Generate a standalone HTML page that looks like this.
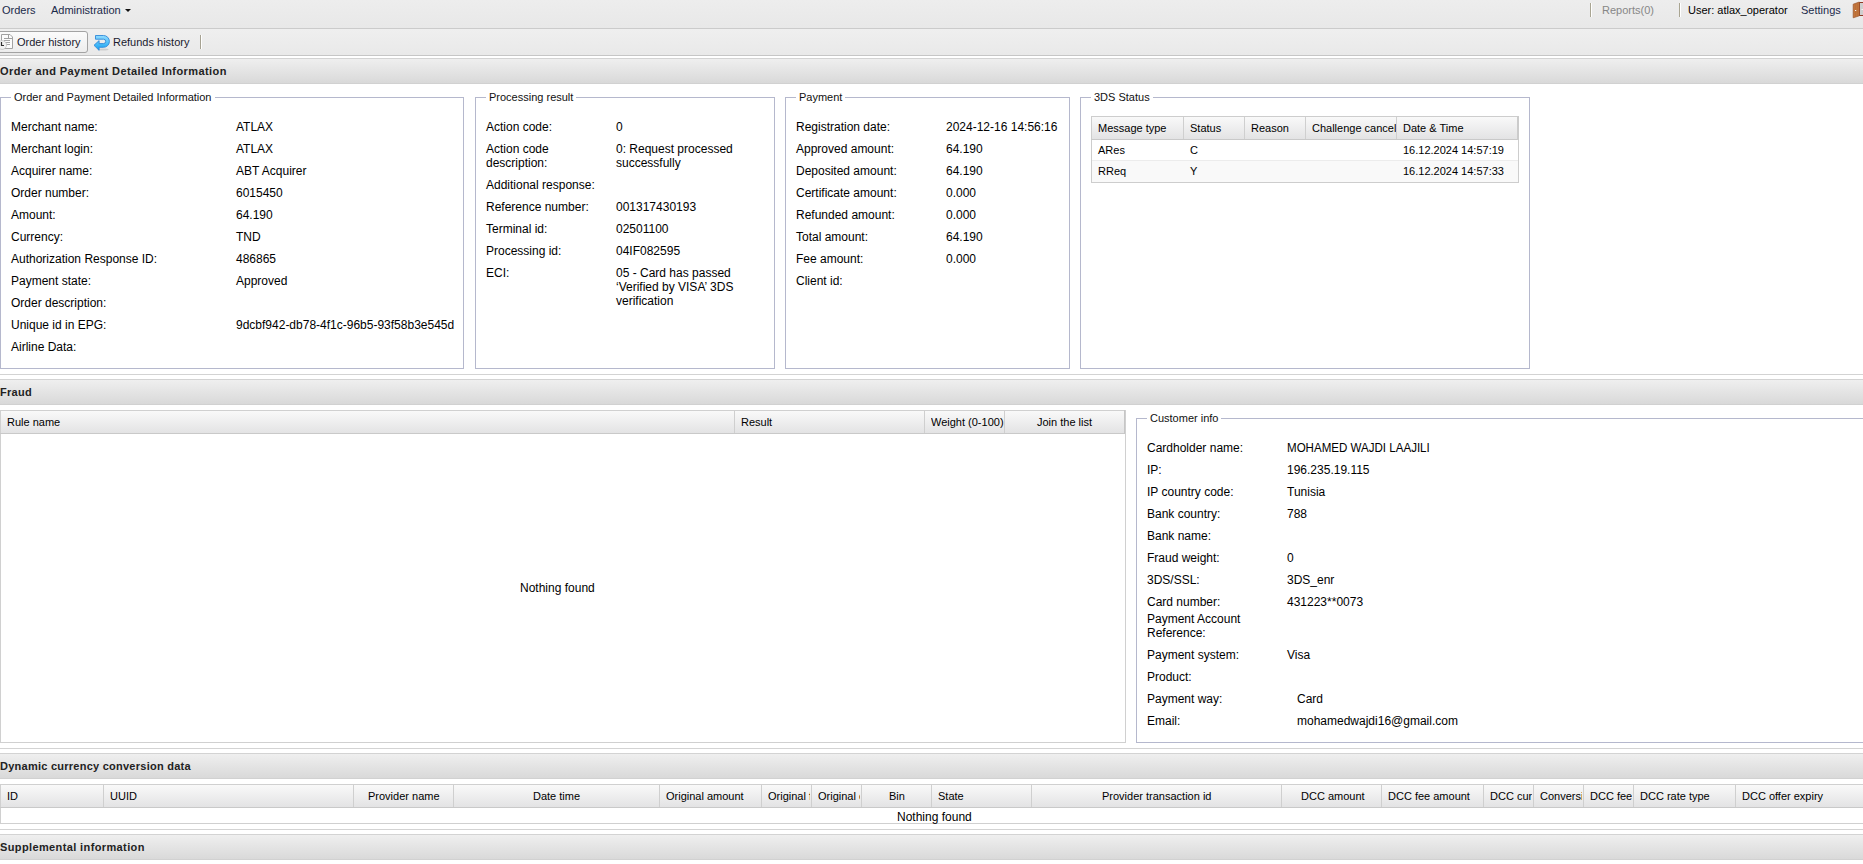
<!DOCTYPE html><html><head><meta charset="utf-8"><style>
*{box-sizing:border-box;margin:0;padding:0}
html,body{width:1863px;height:864px;overflow:hidden;background:#fff;font-family:"Liberation Sans",sans-serif;font-size:12px;color:#000}
.a{position:absolute;white-space:nowrap;line-height:14px}
.r{position:absolute}
.hl{position:absolute;left:0;width:1863px;height:1px}
.hdr{position:absolute;left:0;width:1863px;height:25px;background:linear-gradient(#efefef,#d9d9d9);border-bottom:1px solid #d1d1d1}
.b{font-weight:bold;color:#222}
.lg{font-size:11px;color:#111;background:#fff;padding:0 3px}
.fs{position:absolute;border:1px solid #b5b8cd}
.th{position:absolute;background:linear-gradient(#f9f9f9,#e3e3e4)}
.vd{position:absolute;width:1px;background:#cfcfcf}
</style></head><body>
<div class="r" style="left:0;top:0;width:1863px;height:28px;background:linear-gradient(#ededed,#e8e8e8)"></div>
<div class="hl" style="top:28px;background:#cbcbcb"></div>
<div class="a " style="left:2px;top:3px;color:#1b2a4a;font-size:11px;">Orders</div>
<div class="a " style="left:51px;top:3px;color:#1b2a4a;font-size:11px;">Administration</div>
<div class="r" style="left:125px;top:9px;width:0;height:0;border-left:3px solid transparent;border-right:3px solid transparent;border-top:3px solid #111"></div>
<div class="r" style="left:1590px;top:3px;width:1px;height:14px;background:#a9a592"></div><div class="r" style="left:1591px;top:3px;width:1px;height:14px;background:#fff"></div>
<div class="a " style="left:1602px;top:3px;color:#878787;font-size:11px;">Reports(0)</div>
<div class="r" style="left:1679px;top:3px;width:1px;height:14px;background:#a9a592"></div><div class="r" style="left:1680px;top:3px;width:1px;height:14px;background:#fff"></div>
<div class="a " style="left:1688px;top:3px;color:#000;font-size:11px;">User: atlax_operator</div>
<div class="a " style="left:1801px;top:3px;color:#1b2a4a;font-size:11px;">Settings</div>
<svg class="r" style="left:1852px;top:0" width="11" height="20" viewBox="0 0 11 20">
<rect x="7.5" y="2.5" width="5" height="13" fill="#cfcfcf" stroke="#8e3a24" stroke-width="1"/>
<rect x="9.5" y="9" width="2" height="1" fill="#f4f4f4"/>
<path d="M1.2 4.2 L7.3 2 V15.8 L1.2 17.8 Z" fill="#c67a40" stroke="#9a5228" stroke-width="0.7"/>
<path d="M3.2 4 V16.6 M5.2 3.2 V16" stroke="#b0622e" stroke-width="0.6"/>
<rect x="3" y="10" width="1.2" height="1" fill="#f0f0f0"/>
</svg>
<div class="r" style="left:0;top:29px;width:1863px;height:26px;background:linear-gradient(#efefef,#e9e9e9)"></div>
<div class="hl" style="top:55px;background:#c6c6c6"></div>
<div class="r" style="left:-4px;top:31px;width:92px;height:22px;border:1px solid #a3a3a3;border-radius:3px;background:linear-gradient(#fbfbfb,#ededed)"></div>
<svg class="r" style="left:0;top:32px" width="16" height="20" viewBox="0 0 16 20">
<path d="M1.5 2.5 H10 L12.5 5 V16.5 H1.5 Z" fill="#fcfcfc" stroke="#a2a2a2" stroke-width="1"/>
<path d="M8.5 2.5 V6.5 M4 6.5 H12.5" fill="none" stroke="#a0a0a0" stroke-width="1"/>
<path d="M4 8.5 H10 M5 10.5 H10 M6 12.5 H10" stroke="#a6a6a6" stroke-width="1"/>
<circle cx="2.2" cy="13" r="4.4" fill="#f1f1f1" stroke="#c6c6c6" stroke-width="0.9"/>
<path d="M1.5 10 V13.5 H4" fill="none" stroke="#2e2e2e" stroke-width="1.2"/>
</svg>
<div class="a " style="left:17px;top:35px;color:#1a1a2e;font-size:11px;">Order history</div>
<svg class="r" style="left:91px;top:32px" width="20" height="20" viewBox="0 0 20 20">
<defs><linearGradient id="rg" x1="0" y1="0" x2="0" y2="1"><stop offset="0" stop-color="#92dcff"/><stop offset="1" stop-color="#12a2f2"/></linearGradient></defs>
<ellipse cx="12" cy="17.6" rx="5.5" ry="1" fill="#000" opacity="0.12"/>
<path transform="translate(0.5 0.5)" d="M4 3 H12 A5.9 5.9 0 0 1 12 14.8 H7.6 V17.8 L2.5 12.8 L7.6 8.1 V11.1 H12 A2.2 2.2 0 0 0 12 6.7 H4 Z" fill="url(#rg)" stroke="#3088d8" stroke-width="0.9" stroke-linejoin="round"/>
</svg>
<div class="a " style="left:113px;top:35px;color:#1a1a2e;font-size:11px;">Refunds history</div>
<div class="r" style="left:200px;top:35px;width:1px;height:14px;background:#a6a292"></div><div class="r" style="left:201px;top:35px;width:1px;height:14px;background:#fff"></div>
<div class="hl" style="top:58px;background:#d3d3d3"></div>
<div class="hdr" style="top:59px"></div>
<div class="a b" style="left:0px;top:64px;letter-spacing:0.42px;font-size:11px;">Order and Payment Detailed Information</div>
<div class="fs" style="left:0px;top:97px;width:464px;height:272px"></div>
<div class="a lg" style="left:11px;top:90px">Order and Payment Detailed Information</div>
<div class="a " style="left:11px;top:120px;">Merchant name:</div>
<div class="a " style="left:236px;top:120px;">ATLAX</div>
<div class="a " style="left:11px;top:142px;">Merchant login:</div>
<div class="a " style="left:236px;top:142px;">ATLAX</div>
<div class="a " style="left:11px;top:164px;">Acquirer name:</div>
<div class="a " style="left:236px;top:164px;">ABT Acquirer</div>
<div class="a " style="left:11px;top:186px;">Order number:</div>
<div class="a " style="left:236px;top:186px;">6015450</div>
<div class="a " style="left:11px;top:208px;">Amount:</div>
<div class="a " style="left:236px;top:208px;">64.190</div>
<div class="a " style="left:11px;top:230px;">Currency:</div>
<div class="a " style="left:236px;top:230px;">TND</div>
<div class="a " style="left:11px;top:252px;">Authorization Response ID:</div>
<div class="a " style="left:236px;top:252px;">486865</div>
<div class="a " style="left:11px;top:274px;">Payment state:</div>
<div class="a " style="left:236px;top:274px;">Approved</div>
<div class="a " style="left:11px;top:296px;">Order description:</div>
<div class="a " style="left:11px;top:318px;">Unique id in EPG:</div>
<div class="a " style="left:236px;top:318px;">9dcbf942-db78-4f1c-96b5-93f58b3e545d</div>
<div class="a " style="left:11px;top:340px;">Airline Data:</div>
<div class="fs" style="left:475px;top:97px;width:300px;height:272px"></div>
<div class="a lg" style="left:486px;top:90px">Processing result</div>
<div class="a " style="left:486px;top:120px;">Action code:</div>
<div class="a " style="left:616px;top:120px;">0</div>
<div class="a " style="left:486px;top:142px;">Action code</div>
<div class="a " style="left:486px;top:156px;">description:</div>
<div class="a " style="left:616px;top:142px;">0: Request processed</div>
<div class="a " style="left:616px;top:156px;">successfully</div>
<div class="a " style="left:486px;top:178px;">Additional response:</div>
<div class="a " style="left:486px;top:200px;">Reference number:</div>
<div class="a " style="left:616px;top:200px;">001317430193</div>
<div class="a " style="left:486px;top:222px;">Terminal id:</div>
<div class="a " style="left:616px;top:222px;">02501100</div>
<div class="a " style="left:486px;top:244px;">Processing id:</div>
<div class="a " style="left:616px;top:244px;">04IF082595</div>
<div class="a " style="left:486px;top:266px;">ECI:</div>
<div class="a " style="left:616px;top:266px;">05 - Card has passed</div>
<div class="a " style="left:616px;top:280px;">&#8216;Verified by VISA&#8217; 3DS</div>
<div class="a " style="left:616px;top:294px;">verification</div>
<div class="fs" style="left:785px;top:97px;width:285px;height:272px"></div>
<div class="a lg" style="left:796px;top:90px">Payment</div>
<div class="a " style="left:796px;top:120px;">Registration date:</div>
<div class="a " style="left:946px;top:120px;">2024-12-16 14:56:16</div>
<div class="a " style="left:796px;top:142px;">Approved amount:</div>
<div class="a " style="left:946px;top:142px;">64.190</div>
<div class="a " style="left:796px;top:164px;">Deposited amount:</div>
<div class="a " style="left:946px;top:164px;">64.190</div>
<div class="a " style="left:796px;top:186px;">Certificate amount:</div>
<div class="a " style="left:946px;top:186px;">0.000</div>
<div class="a " style="left:796px;top:208px;">Refunded amount:</div>
<div class="a " style="left:946px;top:208px;">0.000</div>
<div class="a " style="left:796px;top:230px;">Total amount:</div>
<div class="a " style="left:946px;top:230px;">64.190</div>
<div class="a " style="left:796px;top:252px;">Fee amount:</div>
<div class="a " style="left:946px;top:252px;">0.000</div>
<div class="a " style="left:796px;top:274px;">Client id:</div>
<div class="fs" style="left:1080px;top:97px;width:450px;height:272px"></div>
<div class="a lg" style="left:1091px;top:90px">3DS Status</div>
<div class="r" style="left:1091px;top:116px;width:428px;height:67px;border:1px solid #cdcdcd;background:#fff"></div>
<div class="th" style="left:1092px;top:117px;width:426px;height:22px"></div>
<div class="hl" style="left:1091px;width:428px;top:139px;background:#c9c9c9"></div>
<div class="r" style="left:1092px;top:161px;width:426px;height:21px;background:#f9f9f9"></div>
<div class="hl" style="left:1092px;width:426px;top:160px;background:#ececec"></div>
<div class="r" style="left:1517px;top:116px;width:2px;height:24px;background:#cbcbcb"></div>
<div class="vd" style="left:1183px;top:117px;height:22px"></div>
<div class="vd" style="left:1244px;top:117px;height:22px"></div>
<div class="vd" style="left:1305px;top:117px;height:22px"></div>
<div class="vd" style="left:1396px;top:117px;height:22px"></div>
<div class="a " style="left:1098px;top:121px;font-size:11px;">Message type</div>
<div class="a " style="left:1190px;top:121px;font-size:11px;">Status</div>
<div class="a " style="left:1251px;top:121px;font-size:11px;">Reason</div>
<div class="a " style="left:1312px;top:121px;font-size:11px;width:84px;overflow:hidden;">Challenge cancel</div>
<div class="a " style="left:1403px;top:121px;font-size:11px;">Date &amp; Time</div>
<div class="a " style="left:1098px;top:143px;font-size:11px;">ARes</div>
<div class="a " style="left:1190px;top:143px;font-size:11px;">C</div>
<div class="a " style="left:1403px;top:143px;font-size:11px;">16.12.2024 14:57:19</div>
<div class="a " style="left:1098px;top:164px;font-size:11px;">RReq</div>
<div class="a " style="left:1190px;top:164px;font-size:11px;">Y</div>
<div class="a " style="left:1403px;top:164px;font-size:11px;">16.12.2024 14:57:33</div>
<div class="hl" style="top:374px;background:#d3d3d3"></div>
<div class="hl" style="top:379px;background:#d3d3d3"></div>
<div class="hdr" style="top:380px"></div>
<div class="a b" style="left:0px;top:385px;letter-spacing:0.3px;font-size:11px;">Fraud</div>
<div class="r" style="left:0;top:410px;width:1126px;height:333px;border:1px solid #d0d0d0"></div>
<div class="th" style="left:1px;top:411px;width:1124px;height:22px"></div>
<div class="hl" style="left:0;width:1125px;top:433px;background:#c9c9c9"></div>
<div class="r" style="left:1124px;top:410px;width:1px;height:24px;background:#c6c6c6"></div>
<div class="vd" style="left:734px;top:411px;height:22px"></div>
<div class="vd" style="left:924px;top:411px;height:22px"></div>
<div class="vd" style="left:1004px;top:411px;height:22px"></div>
<div class="a " style="left:7px;top:415px;font-size:11px;">Rule name</div>
<div class="a " style="left:741px;top:415px;font-size:11px;">Result</div>
<div class="a " style="left:931px;top:415px;font-size:11px;width:73px;overflow:hidden;">Weight (0-100)</div>
<div class="a " style="left:1037px;top:415px;font-size:11px;">Join the list</div>
<div class="a " style="left:520px;top:581px;">Nothing found</div>
<div class="fs" style="left:1136px;top:418px;width:740px;height:325px"></div>
<div class="a lg" style="left:1147px;top:411px">Customer info</div>
<div class="a " style="left:1147px;top:441px;">Cardholder name:</div>
<div class="a " style="left:1287px;top:441px;transform:scaleX(0.963);transform-origin:0 0;">MOHAMED WAJDI LAAJILI</div>
<div class="a " style="left:1147px;top:463px;">IP:</div>
<div class="a " style="left:1287px;top:463px;">196.235.19.115</div>
<div class="a " style="left:1147px;top:485px;">IP country code:</div>
<div class="a " style="left:1287px;top:485px;">Tunisia</div>
<div class="a " style="left:1147px;top:507px;">Bank country:</div>
<div class="a " style="left:1287px;top:507px;">788</div>
<div class="a " style="left:1147px;top:529px;">Bank name:</div>
<div class="a " style="left:1147px;top:551px;">Fraud weight:</div>
<div class="a " style="left:1287px;top:551px;">0</div>
<div class="a " style="left:1147px;top:573px;">3DS/SSL:</div>
<div class="a " style="left:1287px;top:573px;">3DS_enr</div>
<div class="a " style="left:1147px;top:595px;">Card number:</div>
<div class="a " style="left:1287px;top:595px;">431223**0073</div>
<div class="a " style="left:1147px;top:612px;">Payment Account</div>
<div class="a " style="left:1147px;top:626px;">Reference:</div>
<div class="a " style="left:1147px;top:648px;">Payment system:</div>
<div class="a " style="left:1287px;top:648px;">Visa</div>
<div class="a " style="left:1147px;top:670px;">Product:</div>
<div class="a " style="left:1147px;top:692px;">Payment way:</div>
<div class="a " style="left:1297px;top:692px;">Card</div>
<div class="a " style="left:1147px;top:714px;">Email:</div>
<div class="a " style="left:1297px;top:714px;">mohamedwajdi16@gmail.com</div>
<div class="hl" style="top:748px;background:#d3d3d3"></div>
<div class="hl" style="top:753px;background:#d3d3d3"></div>
<div class="hdr" style="top:754px"></div>
<div class="a b" style="left:0px;top:759px;letter-spacing:0.25px;font-size:11px;">Dynamic currency conversion data</div>
<div class="r" style="left:0;top:784px;width:1875px;height:40px;border:1px solid #d0d0d0"></div>
<div class="th" style="left:1px;top:785px;width:1862px;height:22px"></div>
<div class="hl" style="top:807px;background:#c9c9c9"></div>
<div class="vd" style="left:103px;top:785px;height:22px"></div>
<div class="vd" style="left:353px;top:785px;height:22px"></div>
<div class="vd" style="left:453px;top:785px;height:22px"></div>
<div class="vd" style="left:659px;top:785px;height:22px"></div>
<div class="vd" style="left:761px;top:785px;height:22px"></div>
<div class="vd" style="left:811px;top:785px;height:22px"></div>
<div class="vd" style="left:861px;top:785px;height:22px"></div>
<div class="vd" style="left:931px;top:785px;height:22px"></div>
<div class="vd" style="left:1031px;top:785px;height:22px"></div>
<div class="vd" style="left:1281px;top:785px;height:22px"></div>
<div class="vd" style="left:1381px;top:785px;height:22px"></div>
<div class="vd" style="left:1483px;top:785px;height:22px"></div>
<div class="vd" style="left:1533px;top:785px;height:22px"></div>
<div class="vd" style="left:1583px;top:785px;height:22px"></div>
<div class="vd" style="left:1633px;top:785px;height:22px"></div>
<div class="vd" style="left:1735px;top:785px;height:22px"></div>
<div class="a " style="left:7px;top:789px;font-size:11px;">ID</div>
<div class="a " style="left:110px;top:789px;font-size:11px;">UUID</div>
<div class="a " style="left:368px;top:789px;font-size:11px;">Provider name</div>
<div class="a " style="left:533px;top:789px;font-size:11px;">Date time</div>
<div class="a " style="left:666px;top:789px;font-size:11px;">Original amount</div>
<div class="a " style="left:768px;top:789px;font-size:11px;width:42px;overflow:hidden;">Original f</div>
<div class="a " style="left:818px;top:789px;font-size:11px;width:42px;overflow:hidden;">Original c</div>
<div class="a " style="left:889px;top:789px;font-size:11px;">Bin</div>
<div class="a " style="left:938px;top:789px;font-size:11px;">State</div>
<div class="a " style="left:1102px;top:789px;font-size:11px;">Provider transaction id</div>
<div class="a " style="left:1301px;top:789px;font-size:11px;">DCC amount</div>
<div class="a " style="left:1388px;top:789px;font-size:11px;">DCC fee amount</div>
<div class="a " style="left:1490px;top:789px;font-size:11px;width:42px;overflow:hidden;">DCC curr</div>
<div class="a " style="left:1540px;top:789px;font-size:11px;width:42px;overflow:hidden;">Conversi</div>
<div class="a " style="left:1590px;top:789px;font-size:11px;width:42px;overflow:hidden;">DCC fee</div>
<div class="a " style="left:1640px;top:789px;font-size:11px;">DCC rate type</div>
<div class="a " style="left:1742px;top:789px;font-size:11px;">DCC offer expiry</div>
<div class="a " style="left:897px;top:810px;">Nothing found</div>
<div class="hl" style="top:829px;background:#d3d3d3"></div>
<div class="hl" style="top:834px;background:#d3d3d3"></div>
<div class="hdr" style="top:835px"></div>
<div class="a b" style="left:0px;top:840px;letter-spacing:0.38px;font-size:11px;">Supplemental information</div>
</body></html>
